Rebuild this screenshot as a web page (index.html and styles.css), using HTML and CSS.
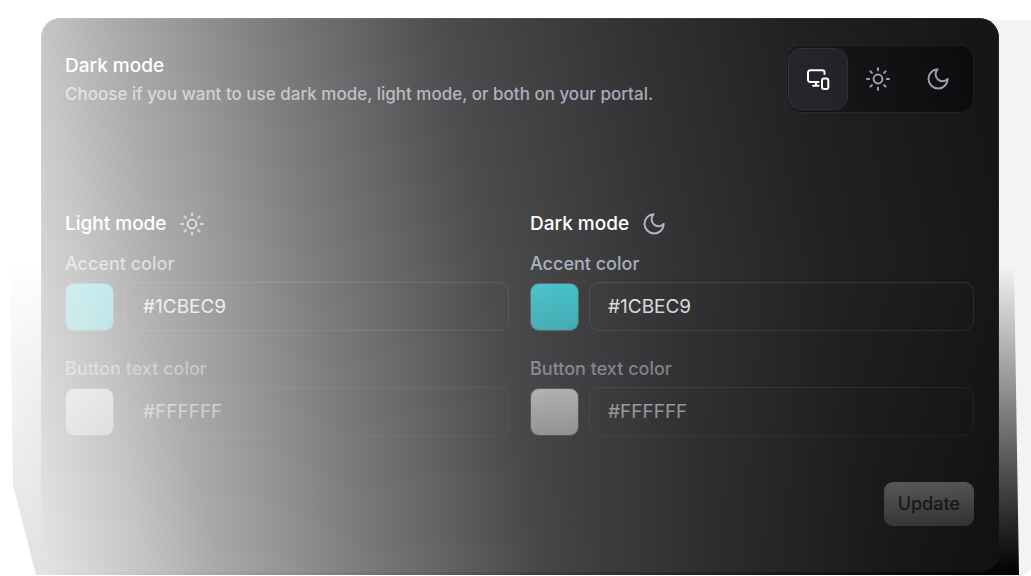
FILE: index.html
```html
<!DOCTYPE html>
<html lang="en">
<head>
<meta charset="utf-8">
<title>Dark mode settings</title>
<link rel="stylesheet" href="styles.css">
</head>
<body>
<svg width="0" height="0" class="sprite" aria-hidden="true">
  <symbol id="sun" viewBox="0 0 24 24"><circle cx="12" cy="12" r="4.4"/><path d="M12 1.2v2M12 20.8v2M1 12h2.2M20.8 12H23M4.4 4.4l1.5 1.5M18.1 18.1l1.5 1.5M4.4 19.6l1.5-1.5M18.1 5.900l1.500-1.500"/></symbol>
  <symbol id="moon" viewBox="0 0 24 24"><path d="M11.500 2.300a6.900 6.900 0 0 0 10.200 9.700A9.600 9.600 0 1 1 11.500 2.300z"/></symbol>
  <symbol id="devices" viewBox="0 0 24 24"><path d="M18.500 7V5.500a2.200 2.200 0 0 0-2.200-2.200H4.200A2.200 2.200 0 0 0 2 5.500v7.300A2.200 2.200 0 0 0 4.200 15H12.500M10 15v3.700M7 18.700h5.500"/><rect x="16" y="11.500" width="6.300" height="10.500" rx="2"/></symbol>
</svg>
<main class="stage">
  <div class="backdrop"></div>
  <div class="shade"></div>
  <form class="card">
    <header class="top">
      <div>
        <h1 class="title">Dark mode</h1>
        <p class="muted intro">Choose if you want to use dark mode, light mode, or both on your portal.</p>
      </div>
      <div class="switcher">
        <button type="button" class="option active" aria-label="Both modes"><svg class="icon"><use href="#devices"/></svg></button>
        <button type="button" class="option" aria-label="Light mode"><svg class="icon"><use href="#sun"/></svg></button>
        <button type="button" class="option" aria-label="Dark mode"><svg class="icon"><use href="#moon"/></svg></button>
      </div>
    </header>
    <div class="columns">
      <section>
        <h2 class="title heading">Light mode <svg class="icon"><use href="#sun"/></svg></h2>
        <label class="muted label" for="light-accent">Accent color</label>
        <div class="field"><button type="button" class="swatch accent" aria-label="Pick light accent color"></button><input class="text" id="light-accent" value="#1CBEC9"></div>
        <label class="muted label" for="light-button">Button text color</label>
        <div class="field"><button type="button" class="swatch" aria-label="Pick light button text color"></button><input class="text" id="light-button" value="#FFFFFF"></div>
      </section>
      <section>
        <h2 class="title heading">Dark mode <svg class="icon"><use href="#moon"/></svg></h2>
        <label class="muted label" for="dark-accent">Accent color</label>
        <div class="field"><button type="button" class="swatch accent" aria-label="Pick dark accent color"></button><input class="text" id="dark-accent" value="#1CBEC9"></div>
        <label class="muted label" for="dark-button">Button text color</label>
        <div class="field"><button type="button" class="swatch" aria-label="Pick dark button text color"></button><input class="text" id="dark-button" value="#FFFFFF"></div>
      </section>
    </div>
    <footer class="actions"><button type="submit" class="update">Update</button></footer>
  </form>
  <div class="veil"></div>
</main>
</body>
</html>
```
FILE: styles.css
```css
* { box-sizing: border-box; }
body { margin: 0; background: #fff; font-family: Inter, "Liberation Sans", sans-serif; }
.sprite { position: absolute; }
.stage { position: relative; padding: 18px 32px 4px 41px; overflow: hidden; }
h1, h2, p { margin: 0; }

.backdrop { position: absolute; top: 20px; right: 0; bottom: 0; width: 80px; background: #f3f3f3; border-radius: 0 0 12px 0; }
/* black haze that rises from the bottom edge behind the card */
.shade {
  position: absolute; top: 265px; left: 10px; right: 12px; bottom: 1px;
  background: linear-gradient(to bottom, rgba(0,0,0,0), #000 98%);
  clip-path: polygon(0 0, calc(100% - 5px) 0, 100% 100%, 26px 100%, 3px 71%);
}
/* white wash across the whole scene, strongest at the left */
.veil {
  position: absolute; inset: 0 0 1px; pointer-events: none;
  background: linear-gradient(79deg,
    rgba(255,255,255,.885) 44px, rgba(255,255,255,.76) 142px, rgba(255,255,255,.645) 217px,
    rgba(255,255,255,.555) 285px, rgba(255,255,255,.445) 369px, rgba(255,255,255,.355) 440px,
    rgba(255,255,255,.265) 512px, rgba(255,255,255,.235) 540px, rgba(255,255,255,.2) 594px,
    rgba(255,255,255,.125) 721px, rgba(255,255,255,.09) 796px, rgba(255,255,255,.05) 876px,
    rgba(255,255,255,0) 1056px);
}
.card { position: relative; padding: 27px 25px 46px 24px; border-radius: 20px; background: #161618; box-shadow: inset 0 0 0 1px #252527; overflow: hidden; }
.card::after {
  content: ""; position: absolute; inset: 247px 0 0; pointer-events: none;
  background: linear-gradient(to bottom, rgba(11,12,14,0), #0b0c0e 98%);
}
.top { display: flex; justify-content: space-between; align-items: flex-start; }
.title { padding-top: 8px; font-size: 19px; line-height: 26px; font-weight: 500; color: #fff; }
.muted { font-size: 18px; line-height: 28px; color: #9a9fb0; }
.intro { margin-top: 1px; font-size: 17px; font-weight: 500; }
.icon { width: 24px; height: 24px; fill: none; stroke: currentColor; stroke-width: 2; stroke-linecap: round; stroke-linejoin: round; }

.switcher { display: flex; padding: 2px 5px 2px 1px; border: 1px solid #1e1e20; border-radius: 14px; background: #0c0c0e; }
.option { display: grid; place-items: center; width: 60px; height: 62px; padding: 0; border: 1px solid transparent; border-radius: 13px; background: none; color: #9a9fb0; }
.option.active { border-color: #28282c; background: #1b1b1f; color: #fff; }

.columns { display: grid; grid-template-columns: 1fr 1fr; gap: 21px; margin-top: 98px; }
.heading { display: flex; align-items: center; gap: 13px; padding: 0; margin-bottom: 13px; }
.heading .icon { color: #a6abbb; }
.label { display: block; font-weight: 500; margin-bottom: 4px; }
.field { display: flex; align-items: center; gap: 10px; margin-bottom: 24px; }
.swatch { flex: none; width: 49px; height: 48px; padding: 0; border: 1px solid #48484a; border-radius: 9px; background: #fff; }
.swatch.accent { background: #1cbec9; }
.text { flex: 1; min-width: 0; height: 49px; padding: 0 18px; border: 1px solid #2e2e31; border-radius: 10px; background: transparent; color: #f2f2f2; font: 400 19px/26px Inter, "Liberation Sans", sans-serif; }
.actions { display: flex; justify-content: flex-end; margin-top: 22px; }
.update { height: 44px; padding: 0 14px; border: 0; border-radius: 9px; background: #fff; color: #18181b; font: 500 18px/26px Inter, "Liberation Sans", sans-serif; }
```
